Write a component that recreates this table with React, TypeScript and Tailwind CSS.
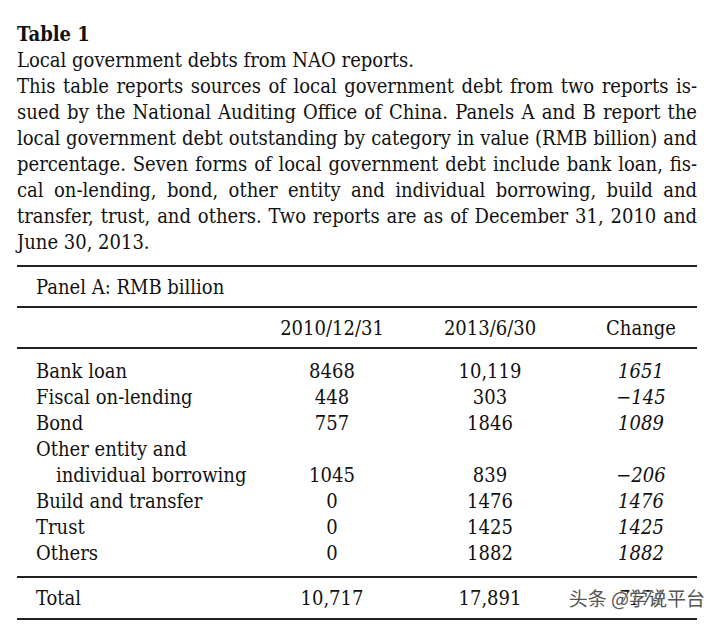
const rows = [
  { label: "Bank loan", a: "8468", b: "10,119", c: "1651" },
  { label: "Fiscal on-lending", a: "448", b: "303", c: "−145" },
  { label: "Bond", a: "757", b: "1846", c: "1089" },
  { label: "Other entity and", sub: "individual borrowing", a: "1045", b: "839", c: "−206" },
  { label: "Build and transfer", a: "0", b: "1476", c: "1476" },
  { label: "Trust", a: "0", b: "1425", c: "1425" },
  { label: "Others", a: "0", b: "1882", c: "1882" },
];

const cols = "grid grid-cols-[224px_144px_172px_130px]";

export default function App() {
  return (
    <div
      className="min-h-[628px] w-[723px] bg-white pl-[17px] pt-[21px] text-[20px] leading-[26px] text-[#111]"
      style={{ fontFamily: '"DejaVu Serif", serif', fontStretch: "condensed" }}
    >
      <div className="w-[680px]">
        <h1 className="font-bold">Table 1</h1>
        <p>Local government debts from NAO reports.</p>
        <p className="text-justify [hyphens:manual]">
          This table reports sources of local government debt from two reports is&shy;sued by the National
          Auditing Office of China. Panels A and B report the local government debt outstanding by category in
          value (RMB billion) and percentage. Seven forms of local government debt include bank loan, fis&shy;cal
          on-lending, bond, other entity and individual borrowing, build and transfer, trust, and others. Two
          reports are as of December 31, 2010 and June 30, 2013.
        </p>

        {/* Panel A */}
        <div className="mt-[10px] border-t-2 border-[#222]">
          <div className="flex h-[41px] items-center border-b-2 border-[#222] pl-[19px]">Panel A: RMB billion</div>
          <div className={`${cols} h-[41px] items-center border-b-2 border-[#222] pl-[19px]`}>
            <span />
            <span className="text-center">2010/12/31</span>
            <span className="text-center">2013/6/30</span>
            <span className="text-center">Change</span>
          </div>
          <div className="border-b-2 border-[#222] pb-[10px] pl-[19px] pt-[9px]">
            {rows.map((r) => (
              <div key={r.label} className={`${cols} items-end`}>
                <span>
                  {r.label}
                  {r.sub && <span className="block pl-[20px]">{r.sub}</span>}
                </span>
                <span className="text-center">{r.a}</span>
                <span className="text-center">{r.b}</span>
                <span className="text-center italic">{r.c}</span>
              </div>
            ))}
          </div>
          <div className="relative">
            <div className={`${cols} h-[42px] items-center border-b-2 border-[#222] pl-[19px]`}>
              <span>Total</span>
              <span className="text-center">10,717</span>
              <span className="text-center">17,891</span>
              <span className="text-center italic">7174</span>
            </div>
            <span
              className="absolute right-[-8px] top-[7px] text-[19px] text-[#555] [text-shadow:0_0_2px_#fff,0_0_2px_#fff]"
              style={{ fontFamily: '"Noto Sans CJK SC", sans-serif' }}
            >
              头条 @学说平台
            </span>
          </div>
        </div>
      </div>
    </div>
  );
}
